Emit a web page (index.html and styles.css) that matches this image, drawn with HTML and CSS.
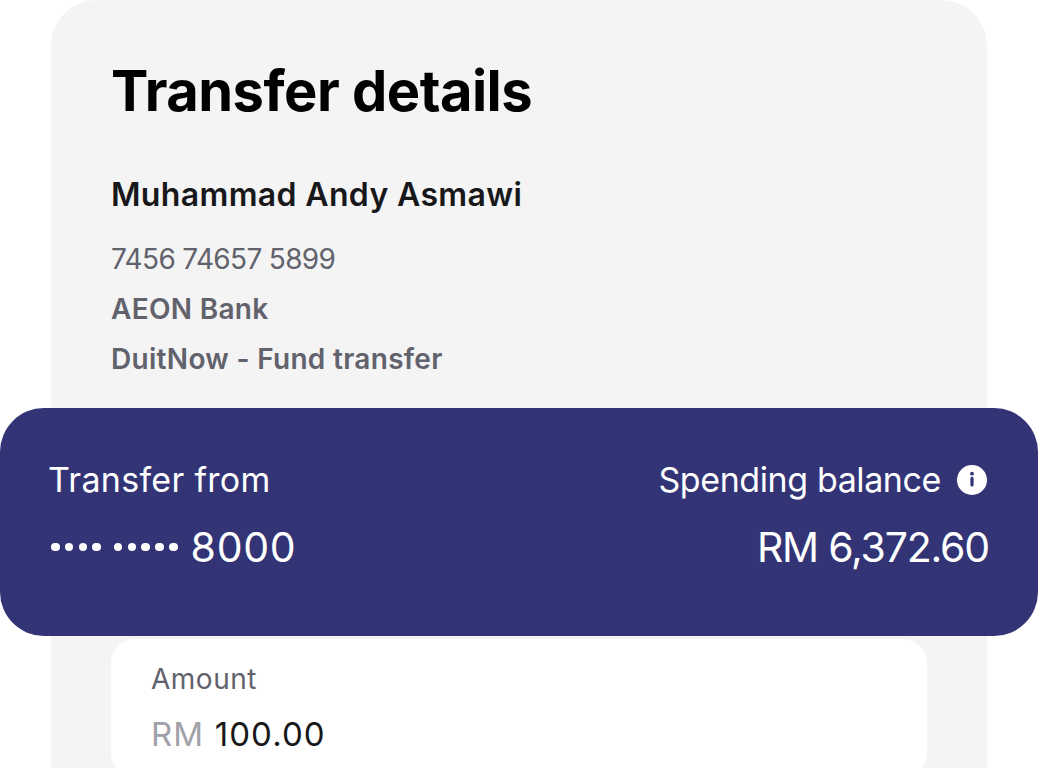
FILE: index.html
```html
<!DOCTYPE html>
<html lang="en">
<head>
<meta charset="utf-8">
<title>Transfer details</title>
<link rel="stylesheet" href="styles.css">
</head>
<body>
<main class="card">
  <section class="details">
    <h1 class="title">Transfer details</h1>
    <h2 class="name">Muhammad Andy Asmawi</h2>
    <p class="line account">7456 74657 5899</p>
    <p class="line strong">AEON Bank</p>
    <p class="line strong">DuitNow - Fund transfer</p>
  </section>
  <section class="band">
    <div class="col">
      <div class="label from">Transfer from</div>
      <div class="value acct"><span class="dots"><i></i><i></i><i></i><i></i></span><span class="dots"><i></i><i></i><i></i><i></i><i></i></span><span>8000</span></div>
    </div>
    <div class="col right">
      <div class="label spend">Spending balance
        <svg class="info" viewBox="0 0 30 30" aria-hidden="true"><circle cx="15" cy="15" r="15" fill="#fff"/><circle cx="15" cy="8.7" r="1.9" fill="#333476"/><path d="M15 13.4v6.6" fill="none" stroke="#333476" stroke-width="3.2" stroke-linecap="round"/></svg>
      </div>
      <div class="value bal">RM 6,372.60</div>
    </div>
  </section>
  <section class="amount">
    <div class="amount-label">Amount</div>
    <div class="amount-value"><span class="cur">RM</span> 100.00</div>
  </section>
</main>
</body>
</html>
```
FILE: styles.css
```css
html, body { margin: 0; padding: 0; background: #fff; }
body { width: 1038px; height: 768px; overflow: hidden; font-family: "Inter", "Noto Sans", sans-serif; }
.card { width: 936px; height: 768px; margin-left: 51px; background: #f4f4f5; border-radius: 46px 46px 0 0; box-sizing: border-box; }
.details { height: 408px; padding: 57px 60px 0; box-sizing: border-box; }
.title { margin: 0 0 50px; font-size: 56px; line-height: 68px; font-weight: 700; color: #000; letter-spacing: -0.5px; }
.name { margin: 0 0 19px; font-size: 32px; line-height: 40px; font-weight: 600; color: #18181b; letter-spacing: 0.35px; }
.line { margin: 0; font-size: 28px; line-height: 50px; color: #62626c; }
.account { font-weight: 400; letter-spacing: -0.65px; }
.strong { font-weight: 600; letter-spacing: 0.3px; }
.band { margin: 0 -51px; height: 228px; background: #333476; border-radius: 44px; color: #fff; display: flex; justify-content: space-between; padding: 49px 49px 0; box-sizing: border-box; }
.col { display: flex; flex-direction: column; gap: 21px; }
.right { align-items: flex-end; }
.label { display: flex; align-items: center; gap: 16px; font-size: 34px; line-height: 46px; }
.from { letter-spacing: 0.3px; margin-left: -1px; }
.spend { letter-spacing: -0.4px; }
.info { width: 30px; height: 30px; margin-right: 2px; }
.value { display: flex; align-items: center; font-size: 41px; line-height: 46px; }
.acct { letter-spacing: 0.7px; }
.bal { letter-spacing: -1.2px; }
.dots { display: flex; gap: 5.3px; margin: 0 13px 0 2px; }
.dots + .dots { margin-left: 0; }
.dots i { width: 8.5px; height: 8.5px; border-radius: 50%; background: #fff; }
.amount { margin: 3px 60px 0; height: 138px; background: #fff; border-radius: 24px; padding: 22px 40px; box-sizing: border-box; }
.amount-label { font-size: 28px; line-height: 36px; color: #62626c; letter-spacing: 0.5px; }
.amount-value { margin-top: 16px; font-size: 33px; line-height: 42px; color: #18181b; letter-spacing: 1.1px; }
.cur { color: #a1a1aa; }
```
